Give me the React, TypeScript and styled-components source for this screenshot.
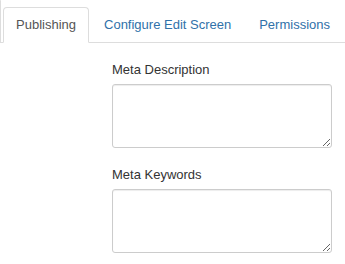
import React from "react";
import styled, { createGlobalStyle } from "styled-components";

const GlobalStyle = createGlobalStyle`
  html, body {
    margin: 0;
    padding: 0;
    background: #fff;
  }
  body {
    font-family: "Liberation Sans", Arial, sans-serif;
    font-size: 13px;
    line-height: 18px;
    color: #333;
  }
`;

const Page = styled.div`
  width: 345px;
  height: 264px;
  overflow: hidden;
`;

const TabList = styled.ul`
  display: flex;
  margin: 0;
  padding: 7px 0 0;
  list-style: none;
  border-bottom: 1px solid #ddd;
  white-space: nowrap;
`;

const Stub = styled.li`
  width: 3px;
  margin: -7px 2px -1px 0;
  background: #f5f5f5;
  border-right: 1px solid #ddd;
  border-top-right-radius: 4px;
`;

const TabItem = styled.li`
  margin-bottom: -1px;
`;

const TabLink = styled.a<{ $active?: boolean }>`
  display: block;
  margin-right: 2px;
  padding: 8px 12px;
  line-height: 18px;
  border: 1px solid transparent;
  border-radius: 4px 4px 0 0;
  text-decoration: none;
  cursor: pointer;
  color: ${({ $active }) => ($active ? "#555" : "#3071a9")};
  background: ${({ $active }) => ($active ? "#fff" : "transparent")};
  border-color: ${({ $active }) =>
    $active ? "#ddd #ddd transparent" : "transparent"};
`;

const Content = styled.div`
  padding: 18px 0 0 112px;
`;

const Field = styled.div`
  margin-bottom: 18px;
`;

const Label = styled.label`
  display: block;
  margin-bottom: 5px;
  color: #333;
`;

const TextArea = styled.textarea`
  display: block;
  box-sizing: border-box;
  width: 220px;
  height: 64px;
  margin: 0;
  padding: 4px 6px;
  font: inherit;
  border: 1px solid #ccc;
  border-radius: 3px;
  box-shadow: inset 0 1px 1px rgba(0, 0, 0, 0.075);
  background: #fff;
`;

const tabs = ["Publishing", "Configure Edit Screen", "Permissions"];
const fields = ["Meta Description", "Meta Keywords"];

export default function App() {
  return (
    <Page>
      <GlobalStyle />
      <TabList>
        <Stub />
        {tabs.map((t, i) => (
          <TabItem key={t}>
            <TabLink $active={i === 0}>{t}</TabLink>
          </TabItem>
        ))}
      </TabList>
      <Content>
        {fields.map((f) => (
          <Field key={f}>
            <Label>{f}</Label>
            <TextArea />
          </Field>
        ))}
      </Content>
    </Page>
  );
}
